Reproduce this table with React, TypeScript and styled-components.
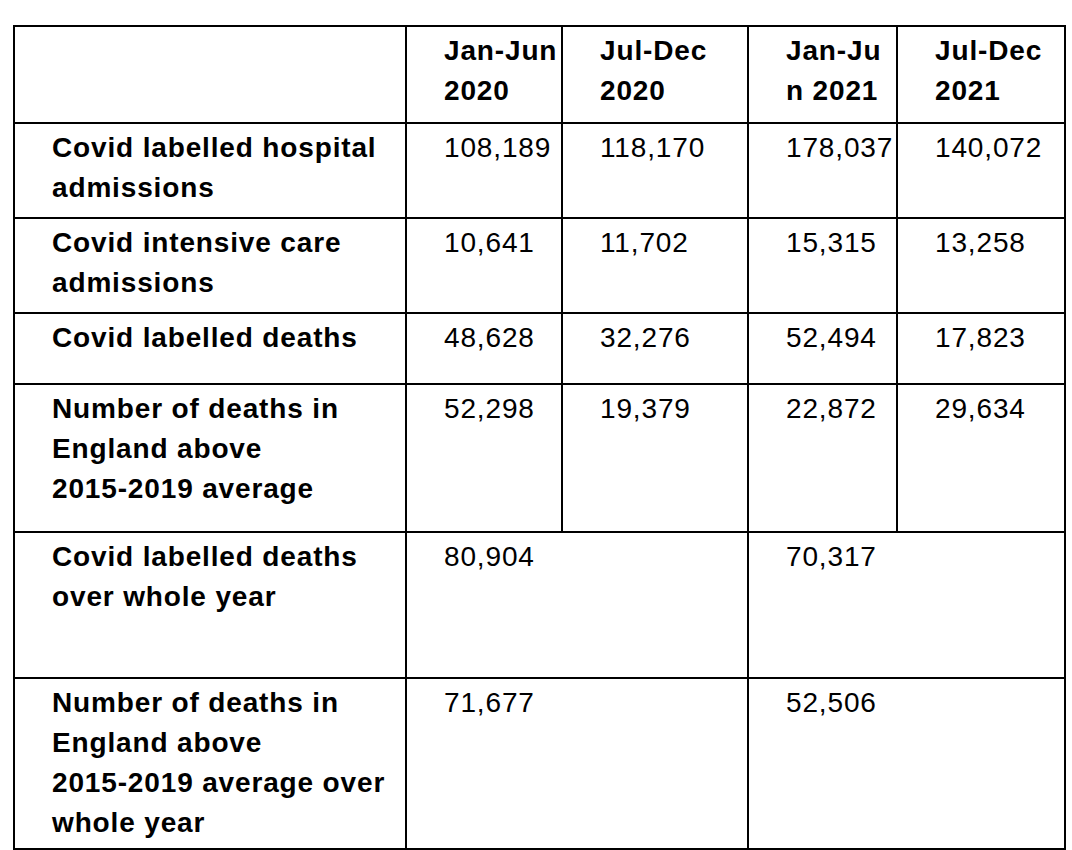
import React from "react";
import styled, { createGlobalStyle } from "styled-components";

const GlobalStyle = createGlobalStyle`
  html, body {
    margin: 0;
    padding: 0;
    background: #ffffff;
  }
  body {
    font-family: "Liberation Sans", Arial, sans-serif;
    color: #000000;
  }
`;

const Page = styled.div`
  padding: 25px 0 0 13px;
  width: 1072px;
  height: 850px;
  box-sizing: border-box;
`;

const Table = styled.table`
  border-collapse: collapse;
  table-layout: fixed;
  width: 1051px;
  font-family: "Liberation Sans", Arial, sans-serif;
  font-size: 28px;
  letter-spacing: 0.85px;
  line-height: 40px;
  color: #000;
`;

const Row = styled.tr<{ $h: number }>`
  height: ${(p) => p.$h}px;
`;

const Cell = styled.td<{ $bold?: boolean }>`
  border: 2px solid #000;
  vertical-align: top;
  padding: 4px 2px 0 37px;
  font-weight: ${(p) => (p.$bold ? 700 : 400)};
  white-space: nowrap;
  overflow: visible;
`;

const Line = styled.span`
  display: block;
`;

type RowData = {
  h: number;
  label: string[];
  cells: { lines: string[]; span?: number }[];
};

const header = {
  h: 97,
  cells: [["Jan-Jun", "2020"], ["Jul-Dec", "2020"], ["Jan-Ju", "n 2021"], ["Jul-Dec", "2021"]],
};

const rows: RowData[] = [
  {
    h: 95,
    label: ["Covid labelled hospital", "admissions"],
    cells: [{ lines: ["108,189"] }, { lines: ["118,170"] }, { lines: ["178,037"] }, { lines: ["140,072"] }],
  },
  {
    h: 95,
    label: ["Covid intensive care", "admissions"],
    cells: [{ lines: ["10,641"] }, { lines: ["11,702"] }, { lines: ["15,315"] }, { lines: ["13,258"] }],
  },
  {
    h: 71,
    label: ["Covid labelled deaths"],
    cells: [{ lines: ["48,628"] }, { lines: ["32,276"] }, { lines: ["52,494"] }, { lines: ["17,823"] }],
  },
  {
    h: 148,
    label: ["Number of deaths in", "England above", "2015-2019 average"],
    cells: [{ lines: ["52,298"] }, { lines: ["19,379"] }, { lines: ["22,872"] }, { lines: ["29,634"] }],
  },
  {
    h: 146,
    label: ["Covid labelled deaths", "over whole year"],
    cells: [{ lines: ["80,904"], span: 2 }, { lines: ["70,317"], span: 2 }],
  },
  {
    h: 171,
    label: ["Number of deaths in", "England above", "2015-2019 average over", "whole year"],
    cells: [{ lines: ["71,677"], span: 2 }, { lines: ["52,506"], span: 2 }],
  },
];

const colWidths = [392, 156, 186, 149, 168];

function Lines({ lines }: { lines: string[] }) {
  return (
    <>
      {lines.map((l, i) => (
        <Line key={i}>{l}</Line>
      ))}
    </>
  );
}

export default function App() {
  return (
    <>
      <GlobalStyle />
      <Page>
        <Table>
          <colgroup>
            {colWidths.map((w, i) => (
              <col key={i} style={{ width: w }} />
            ))}
          </colgroup>
          <tbody>
            <Row $h={header.h}>
              <Cell $bold />
              {header.cells.map((c, i) => (
                <Cell key={i} $bold>
                  <Lines lines={c} />
                </Cell>
              ))}
            </Row>
            {rows.map((r, ri) => (
              <Row key={ri} $h={r.h}>
                <Cell $bold>
                  <Lines lines={r.label} />
                </Cell>
                {r.cells.map((c, ci) => (
                  <Cell key={ci} colSpan={c.span}>
                    <Lines lines={c.lines} />
                  </Cell>
                ))}
              </Row>
            ))}
          </tbody>
        </Table>
      </Page>
    </>
  );
}
